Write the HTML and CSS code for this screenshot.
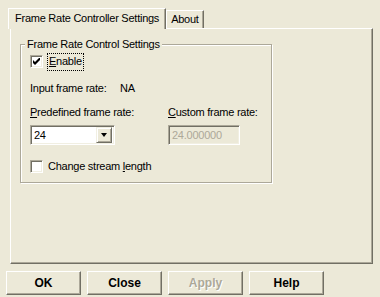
FILE: index.html
```html
<!DOCTYPE html>
<html lang="en">
<head>
    <meta charset="UTF-8">
    <title>Frame Rate Controller Properties</title>
    <link rel="stylesheet" href="styles.css">
</head>
<body>
    <div class="dialog">
        <!-- Tab strip -->
        <div class="tabs">
            <div class="tab active">Frame Rate Controller Settings</div>
            <div class="tab">About</div>
        </div>

        <!-- Tab page -->
        <div class="panel">
            <fieldset class="group">
                <legend>Frame Rate Control Settings</legend>

                <div class="row row-enable">
                    <span class="check checked">
                        <svg width="7" height="7" viewBox="0 0 7 7"><path d="M0 2v3l2 2l5-5v-3l-5 5z" fill="#000"/></svg>
                    </span>
                    <span class="focus"><u>E</u>nable</span>
                </div>

                <div class="row row-input">
                    <span class="label-input">Input frame rate:</span>
                    <span>NA</span>
                </div>

                <div class="fields">
                    <div class="field">
                        <div class="field-label"><u>P</u>redefined frame rate:</div>
                        <div class="combo">
                            <span class="combo-text">24</span>
                            <span class="combo-btn"><span class="arrow"></span></span>
                        </div>
                    </div>
                    <div class="field field-custom">
                        <div class="field-label"><u>C</u>ustom frame rate:</div>
                        <div class="edit disabled">24.000000</div>
                    </div>
                </div>

                <div class="row row-length">
                    <span class="check"></span>
                    <span>Change stream <u>l</u>ength</span>
                </div>
            </fieldset>
        </div>

        <!-- Dialog buttons -->
        <div class="buttons">
            <div class="btn">OK</div>
            <div class="btn">Close</div>
            <div class="btn disabled">Apply</div>
            <div class="btn">Help</div>
        </div>
    </div>
</body>
</html>
```

FILE: styles.css
```css
* {
    margin: 0;
    padding: 0;
    box-sizing: border-box;
}

body {
    width: 380px;
    height: 297px;
    overflow: hidden;
    background: #ece9d8;
    color: #000;
    font-family: 'Liberation Sans', Arial, sans-serif;
    font-size: 11px;
    line-height: 13px;
    letter-spacing: -0.25px;
}

u {
    text-decoration: underline;
    text-underline-offset: 1px;
}

.dialog {
    padding-top: 8px;
}

/* Tabs */
.tabs {
    display: flex;
    align-items: flex-end;
    height: 20px;
    padding-left: 8px;
}

.tab {
    height: 18px;
    padding: 2px 4px 0 4px;
    border-left: 1px solid #fff;
    border-top: 1px solid #fff;
    border-right: 1px solid #716f64;
    box-shadow: inset -1px 0 #aca899;
    background: #ece9d8;
    white-space: nowrap;
}

.tab.active {
    position: relative;
    z-index: 1;
    height: 21px;
    margin-bottom: -1px;
    padding: 3px 6px 0 6px;
}

/* Tab page */
.panel {
    width: 363px;
    height: 236px;
    margin-left: 10px;
    padding: 9px 0 0 9px;
    border-top: 1px solid #fff;
    border-left: 1px solid #fff;
    border-right: 1px solid #716f64;
    border-bottom: 1px solid #716f64;
    box-shadow: inset -1px -1px #aca899;
}

/* Group box */
.group {
    width: 252px;
    height: 145px;
    min-width: 0;
    padding: 0 0 0 9px;
    border: 1px solid #aca899;
    box-shadow: inset 1px 1px #fff, 1px 1px #fff;
}

.group legend {
    margin-left: -5px;
    padding: 0 2px;
    background: #ece9d8;
}

.row {
    display: flex;
    align-items: center;
}

.row-enable {
    height: 17px;
    margin-top: 2px;
}

.row-input {
    margin-top: 12px;
}

.label-input {
    width: 90px;
}

.row-length {
    margin-top: 15px;
}

/* Check boxes */
.check {
    display: flex;
    align-items: center;
    justify-content: center;
    width: 13px;
    height: 13px;
    margin-right: 5px;
    background: #fff;
    border-top: 1px solid #aca899;
    border-left: 1px solid #aca899;
    border-right: 1px solid #fff;
    border-bottom: 1px solid #fff;
    box-shadow: inset 1px 1px #716f64, inset -1px -1px #f1efe2;
}

.focus {
    padding: 1px 1px 2px 1px;
    margin-left: -1px;
    border: 1px dotted #000;
}

/* Fields */
.fields {
    display: flex;
    margin-top: 11px;
}

.field {
    width: 138px;
}

.field-custom {
    width: 100px;
}

.field-label {
    height: 19px;
    white-space: nowrap;
}

.combo,
.edit {
    height: 20px;
    border-top: 1px solid #aca899;
    border-left: 1px solid #aca899;
    border-right: 1px solid #fff;
    border-bottom: 1px solid #fff;
    box-shadow: inset 1px 1px #716f64, inset -1px -1px #f1efe2;
}

.combo {
    display: flex;
    align-items: center;
    width: 85px;
    padding: 2px;
    background: #fff;
}

.combo-text {
    flex: 1;
    padding-left: 1px;
}

.combo-btn {
    display: flex;
    align-items: center;
    justify-content: center;
    width: 16px;
    height: 16px;
    background: #ece9d8;
    border-top: 1px solid #f1efe2;
    border-left: 1px solid #f1efe2;
    border-right: 1px solid #716f64;
    border-bottom: 1px solid #716f64;
    box-shadow: inset 1px 1px #fff, inset -1px -1px #aca899;
}

.arrow {
    width: 0;
    height: 0;
    border-left: 3.5px solid transparent;
    border-right: 3.5px solid transparent;
    border-top: 4px solid #000;
}

.edit {
    width: 72px;
    padding: 3px 0 0 3px;
}

.edit.disabled {
    color: #aca899;
}

/* Buttons */
.buttons {
    display: flex;
    gap: 6px;
    margin-top: 7px;
    padding-left: 6px;
}

.btn {
    width: 75px;
    height: 24px;
    padding-top: 5px;
    text-align: center;
    font-size: 12px;
    font-weight: bold;
    letter-spacing: 0;
    border-top: 1px solid #fff;
    border-left: 1px solid #fff;
    border-right: 1px solid #716f64;
    border-bottom: 1px solid #716f64;
    box-shadow: inset -1px -1px #aca899;
}

.btn.disabled {
    color: #aca899;
    text-shadow: 1px 1px #fff;
}
```
